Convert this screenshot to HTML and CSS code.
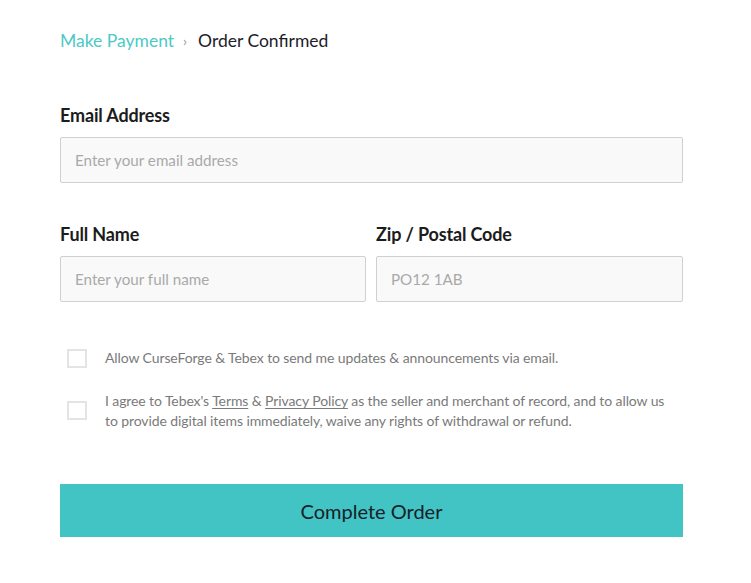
FILE: index.html
```html
<!DOCTYPE html>
<html lang="en">
<head>
<meta charset="utf-8">
<title>Checkout</title>
<link rel="stylesheet" href="styles.css">
</head>
<body>
<div class="page">
  <nav class="breadcrumb">
    <span class="crumb-link">Make Payment</span>
    <span class="crumb-sep">›</span>
    <span class="crumb-current">Order Confirmed</span>
  </nav>

  <div class="field field-email">
    <label class="label">Email Address</label>
    <div class="input"><span class="placeholder">Enter your email address</span></div>
  </div>

  <div class="row">
    <div class="field">
      <label class="label">Full Name</label>
      <div class="input"><span class="placeholder">Enter your full name</span></div>
    </div>
    <div class="field">
      <label class="label">Zip / Postal Code</label>
      <div class="input"><span class="placeholder">PO12 1AB</span></div>
    </div>
  </div>

  <div class="checks">
    <div class="check">
      <span class="box"></span>
      <span class="check-text">Allow CurseForge &amp; Tebex to send me updates &amp; announcements via email.</span>
    </div>
    <div class="check check-top">
      <span class="box"></span>
      <span class="check-text">I agree to Tebex's <u>Terms</u> &amp; <u>Privacy Policy</u> as the seller and merchant of record, and to allow us to provide digital items immediately, waive any rights of withdrawal or refund.</span>
    </div>
  </div>

  <button class="submit">Complete Order</button>
</div>
</body>
</html>
```

FILE: styles.css
```css
* { box-sizing: border-box; }
body {
  margin: 0;
  background: #fff;
  font-family: Lato, "Open Sans", sans-serif;
  color: #1c1c1c;
}
.page {
  width: 751px;
  padding: 30px 68px 0 60px;
}
.breadcrumb {
  display: flex;
  align-items: center;
  font-size: 17.5px;
  line-height: 22px;
}
.crumb-link { color: #4cc9c6; }
.crumb-sep {
  color: #999;
  font-size: 14px;
  margin: 0 11px 0 9px;
}
.crumb-current { color: #1c1c2a; }

.field-email { margin-top: 52px; }
.label {
  display: block;
  font-weight: 700;
  font-size: 18px;
  line-height: 22px;
  color: #1c1c1c;
  margin-bottom: 11px;
  letter-spacing: -0.15px;
}
.input {
  height: 46px;
  border: 1px solid #d0d0d0;
  border-radius: 2px;
  background: #f9f9f9;
  display: flex;
  align-items: center;
  padding-left: 14px;
}
.placeholder {
  font-size: 15.2px;
  color: #a9a9a9;
}
.row {
  margin-top: 40px;
  display: grid;
  grid-template-columns: 306px 307px;
  column-gap: 10px;
}
.checks {
  margin-top: 46px;
  display: flex;
  flex-direction: column;
  gap: 23px;
  padding-left: 7px;
}
.check {
  display: flex;
  align-items: center;
  gap: 18px;
}
.check-top .box { margin-top: -2px; }
.box {
  flex: none;
  width: 20px;
  height: 19px;
  border: 2px solid #e4e4e4;
  background: #fff;
}
.check-text {
  max-width: 570px;
  font-size: 14px;
  line-height: 20px;
  color: #7a7a7a;
  letter-spacing: -0.1px;
}
.check-text u { text-underline-offset: 2px; }
.submit {
  display: block;
  margin-top: 53px;
  width: 623px;
  height: 53px;
  border: none;
  background: #42c4c5;
  font-family: Lato, "Open Sans", sans-serif;
  font-size: 20px;
  color: #172028;
  padding: 0;
}
```
